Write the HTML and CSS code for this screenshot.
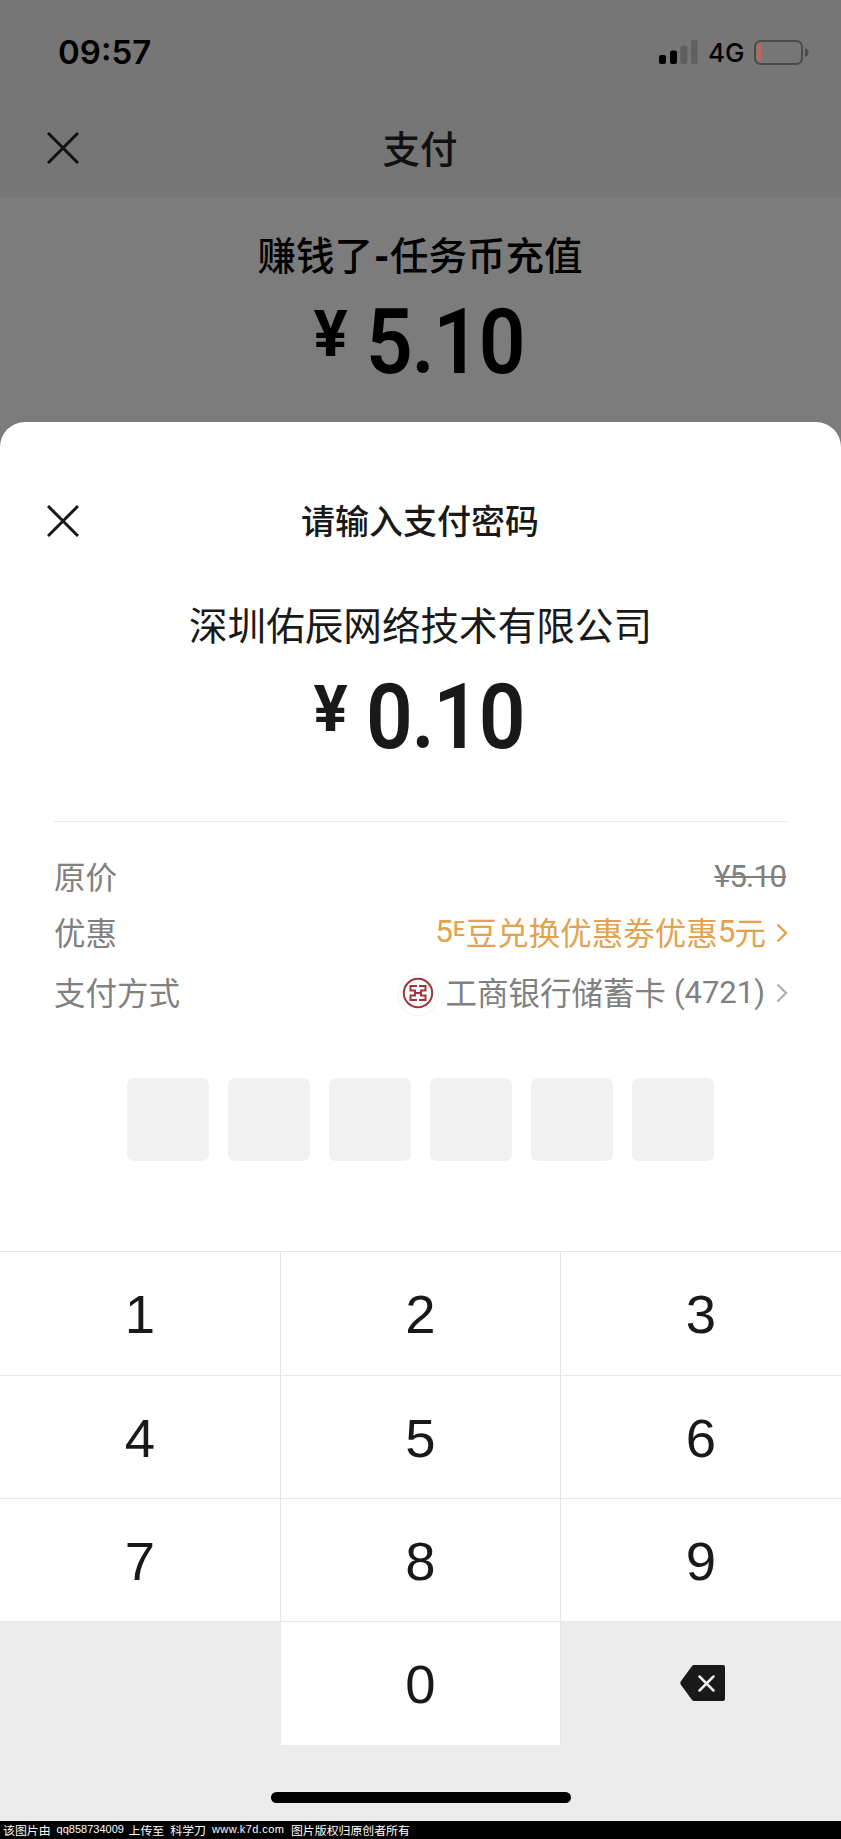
FILE: index.html
```html
<!DOCTYPE html>
<html lang="zh-CN">
<head>
<meta charset="utf-8">
<title>支付</title>
<link rel="stylesheet" href="styles.css">
</head>
<body>
<div class="screen">
  <header class="top">
    <div class="status">
      <span class="time">09:57</span>
      <div class="status-icons">
        <svg class="signal" viewBox="0 0 39 25"><rect x="0" y="15" width="7" height="9" rx="2"/><rect x="11" y="10.5" width="7" height="13.5" rx="2"/><g fill="#606060"><rect x="21.3" y="5.5" width="7" height="18.5" rx="2"/><rect x="32" y="0" width="6.5" height="24" rx="2"/></g></svg>
        <span class="network">4G</span>
        <svg class="battery" viewBox="0 0 55 25"><rect x="1" y="1" width="47" height="23" rx="5.5" fill="none" stroke="#4b4b4b" stroke-width="2"/><path d="M3 8q0-4 4.5-5v19q-4.5-1-4.5-5z" fill="#c3605c"/><path d="M51 8q3.5 1.5 3.5 4.5T51 17z" fill="#4b4b4b"/></svg>
      </div>
    </div>
    <div class="nav">
      <svg class="close" viewBox="0 0 32 32"><path d="M1 1L31 31M31 1L1 31"/></svg>
      <h1 class="nav-title">支付</h1>
    </div>
  </header>
  <section class="order">
    <h2 class="order-title">赚钱了<span class="dash">-</span>任务币充值</h2>
    <div class="amount"><span class="yen">¥</span><span class="num">5.10</span></div>
  </section>
  <main class="sheet">
    <div class="sheet-head">
      <svg class="close" viewBox="0 0 32 32"><path d="M1 1L31 31M31 1L1 31"/></svg>
      <h2 class="sheet-title">请输入支付密码</h2>
    </div>
    <p class="company">深圳佑辰网络技术有限公司</p>
    <div class="amount amount-pay"><span class="yen">¥</span><span class="num">0.10</span></div>
    <div class="details">
      <div class="row row-price"><span>原价</span><span class="old-price">¥5.10</span></div>
      <div class="row row-discount"><span>优惠</span><span class="value gold"><span class="d">5</span><span class="e">E</span><span>豆兑换优惠劵优惠</span><span class="d">5</span><span>元</span><svg class="chev" viewBox="0 0 12 20"><path d="M1.5 1.5L10 10L1.5 18.5"/></svg></span></div>
      <div class="row row-method"><span>支付方式</span><span class="value"><svg class="bank" viewBox="0 0 32 32"><circle cx="16" cy="16" r="14.2"/><path d="M15 9H8.5V13.5H13V18.500H8.500V23H15M17 9H23.500V13.500H19V18.500H23.500V23H17M13 16H19"/></svg><span>工商银行储蓄卡</span><span class="tail">(4721)</span><svg class="chev grey" viewBox="0 0 12 20"><path d="M1.5 1.5L10 10L1.5 18.5"/></svg></span></div>
    </div>
    <div class="pin"><i></i><i></i><i></i><i></i><i></i><i></i></div>
    <div class="keypad">
      <button>1</button><button>2</button><button>3</button>
      <button>4</button><button>5</button><button>6</button>
      <button>7</button><button>8</button><button>9</button>
      <span class="blank"></span><button>0</button>
      <span class="blank del"><svg viewBox="0 0 45 36"><path d="M14 0H43Q45 0 45 2V34Q45 36 43 36H14Q13 36 12 35L.7 19.5Q0 18 .7 16.5L12 1Q13 0 14 0Z" fill="#191919"/><path d="M19.5 11.5L33.5 25.5M33.5 11.5L19.5 25.5" stroke="#ececec" stroke-width="2.5" stroke-linecap="round"/></svg></span>
    </div>
    <div class="home"><div class="bar"></div></div>
  </main>
  <footer class="credit"><span>该图片由</span><span class="latin">qq858734009</span><span>上传至</span><span>科学刀</span><span class="latin site">www.k7d.com</span><span>图片版权归原创者所有</span></footer>
</div>
</body>
</html>
```
FILE: styles.css
```css
* { box-sizing: border-box; }
body, h1, h2, p { margin: 0; }
body { background: #7c7c7c; font-family: "Liberation Sans", "Noto Sans CJK SC", sans-serif; }
.screen { width: 841px; height: 1839px; display: flex; flex-direction: column; overflow: hidden; background: #7c7c7c; }
.top { height: 197px; flex: none; background: #767676; color: #000; }
.status { height: 104px; padding: 0 32px 0 58px; display: flex; justify-content: space-between; align-items: center; }
.time { font: 600 33px/40px Inter, sans-serif; }
.status-icons { display: flex; align-items: center; }
.signal { width: 39px; height: 25px; margin-right: 10px; }
.network { font: 500 26px/32px Inter, sans-serif; width: 46px; white-space: nowrap; padding-top: 1px; }
.battery { width: 55px; height: 25px; }
.nav { height: 88px; display: grid; grid-template-columns: 127px 1fr 127px; align-items: center; text-align: center; }
.close { width: 32px; height: 32px; margin-left: 47px; display: block; fill: none; stroke: #111; stroke-width: 3; }
.nav-title { font: 500 37.5px/56px "Noto Sans CJK SC", sans-serif; color: #111; padding: 0 1px 2px 0; }
.order { height: 224.5px; flex: none; padding-top: 28px; text-align: center; color: #000; }
.order-title { font: 500 38.5px/56px "Noto Sans CJK SC", sans-serif; padding-right: 1px; }
.dash { display: inline-block; width: 17px; font-weight: 900; }
.amount { display: flex; justify-content: center; align-items: flex-start; font-family: Roboto, sans-serif; height: 90px; margin-top: 15px; }
.yen { font-size: 64px; line-height: 78px; font-weight: 700; width: 52px; text-align: left; }
.num { font-size: 91px; line-height: 92px; font-weight: 600; letter-spacing: -1.5px; margin-right: -14px; transform: scaleX(.9); transform-origin: left; }
.sheet { height: 1399.5px; flex: none; background: #fff; border-radius: 25px 25px 0 0; color: #191919; display: flex; flex-direction: column; overflow: hidden; }
.sheet-head { margin-top: 70.5px; height: 56px; flex: none; display: grid; grid-template-columns: 127px 1fr 127px; align-items: center; text-align: center; }
.sheet-head .close { stroke: #191919; margin-top: -1px; }
.sheet-title { font: 500 34px/56px "Noto Sans CJK SC", sans-serif; padding: 0 1px 2px 0; }
.company { margin-top: 47px; height: 56px; flex: none; font: 400 38.6px/56px "Noto Sans CJK SC", sans-serif; text-align: center; }
.amount-pay { margin-top: 20px; flex: none; }
.details { margin: 60px 53px 0 54px; height: 257px; flex: none; border-top: 1px solid #ebebeb; padding-top: 25px; color: #808080; font: 400 31.5px/56px "Noto Sans CJK SC", sans-serif; }
.row { display: flex; justify-content: space-between; height: 56px; }
.row-method { margin-top: 4px; }
.value { display: flex; align-items: center; }
.old-price { font-family: Roboto, sans-serif; font-size: 31px; letter-spacing: -1px; text-decoration: line-through; text-decoration-thickness: 2px; padding: 2px 2px 0 0; }
.gold { color: #e3a250; }
.d { font-family: Roboto, sans-serif; padding-top: 2px; letter-spacing: -1px; }
.e { font: 500 21px/28px Roboto, sans-serif; align-self: flex-start; margin: 12px 1px 0 1px; }
.chev { width: 12px; height: 20px; margin: 4px 0 0 10px; fill: none; stroke: #e3a250; stroke-width: 2.4; }
.grey { stroke: #b2b2b2; }
.tail { font-family: Roboto, sans-serif; font-size: 31px; margin-left: 8px; padding: 3px 1px 0 0; }
.bank { width: 32px; height: 32px; margin: 3px 11px 0 0; fill: none; stroke: #a2343a; stroke-width: 2; border-radius: 50%; box-shadow: 0 2px 0 4px #fff, 0 2px 0 5px #f1f3f7; }
.pin { display: flex; gap: 18.7px; margin-left: 127px; height: 173px; flex: none; }
.pin i { width: 82.3px; height: 82.8px; border-radius: 7px; background: #f1f1f1; }
.keypad { flex: none; height: 494px; display: grid; grid-template-columns: 281px 280px 280px; grid-template-rows: 124px 123px 123px 124px; }
.keypad button { border: 0; border-top: 1px solid #e6e6e6; border-right: 1px solid #e6e6e6; background: #fff; color: #191919; font: 400 54.5px/60px "Liberation Sans", sans-serif; padding: 3px 0 0; }
.keypad button:nth-child(3n) { border-right: 0; }
.blank { background: #ececec; border-top: 1px solid #e6e6e6; }
.del { display: flex; align-items: center; justify-content: center; }
.del svg { width: 45px; height: 36px; margin: 0 0 1px 3px; }
.home { flex: 1; background: #ececec; display: flex; justify-content: center; padding: 47px 0 0 1px; }
.bar { width: 300px; height: 11px; border-radius: 6px; background: #000; }
.credit { height: 18px; background: #000; color: #fff; display: flex; gap: 6px; padding-left: 3px; font: 400 11.9px/17px "Noto Sans CJK SC", sans-serif; white-space: nowrap; }
.latin { font-family: "Liberation Sans", sans-serif; font-size: 11px; width: 66px; }
.site { width: 73px; letter-spacing: .4px; }
```
